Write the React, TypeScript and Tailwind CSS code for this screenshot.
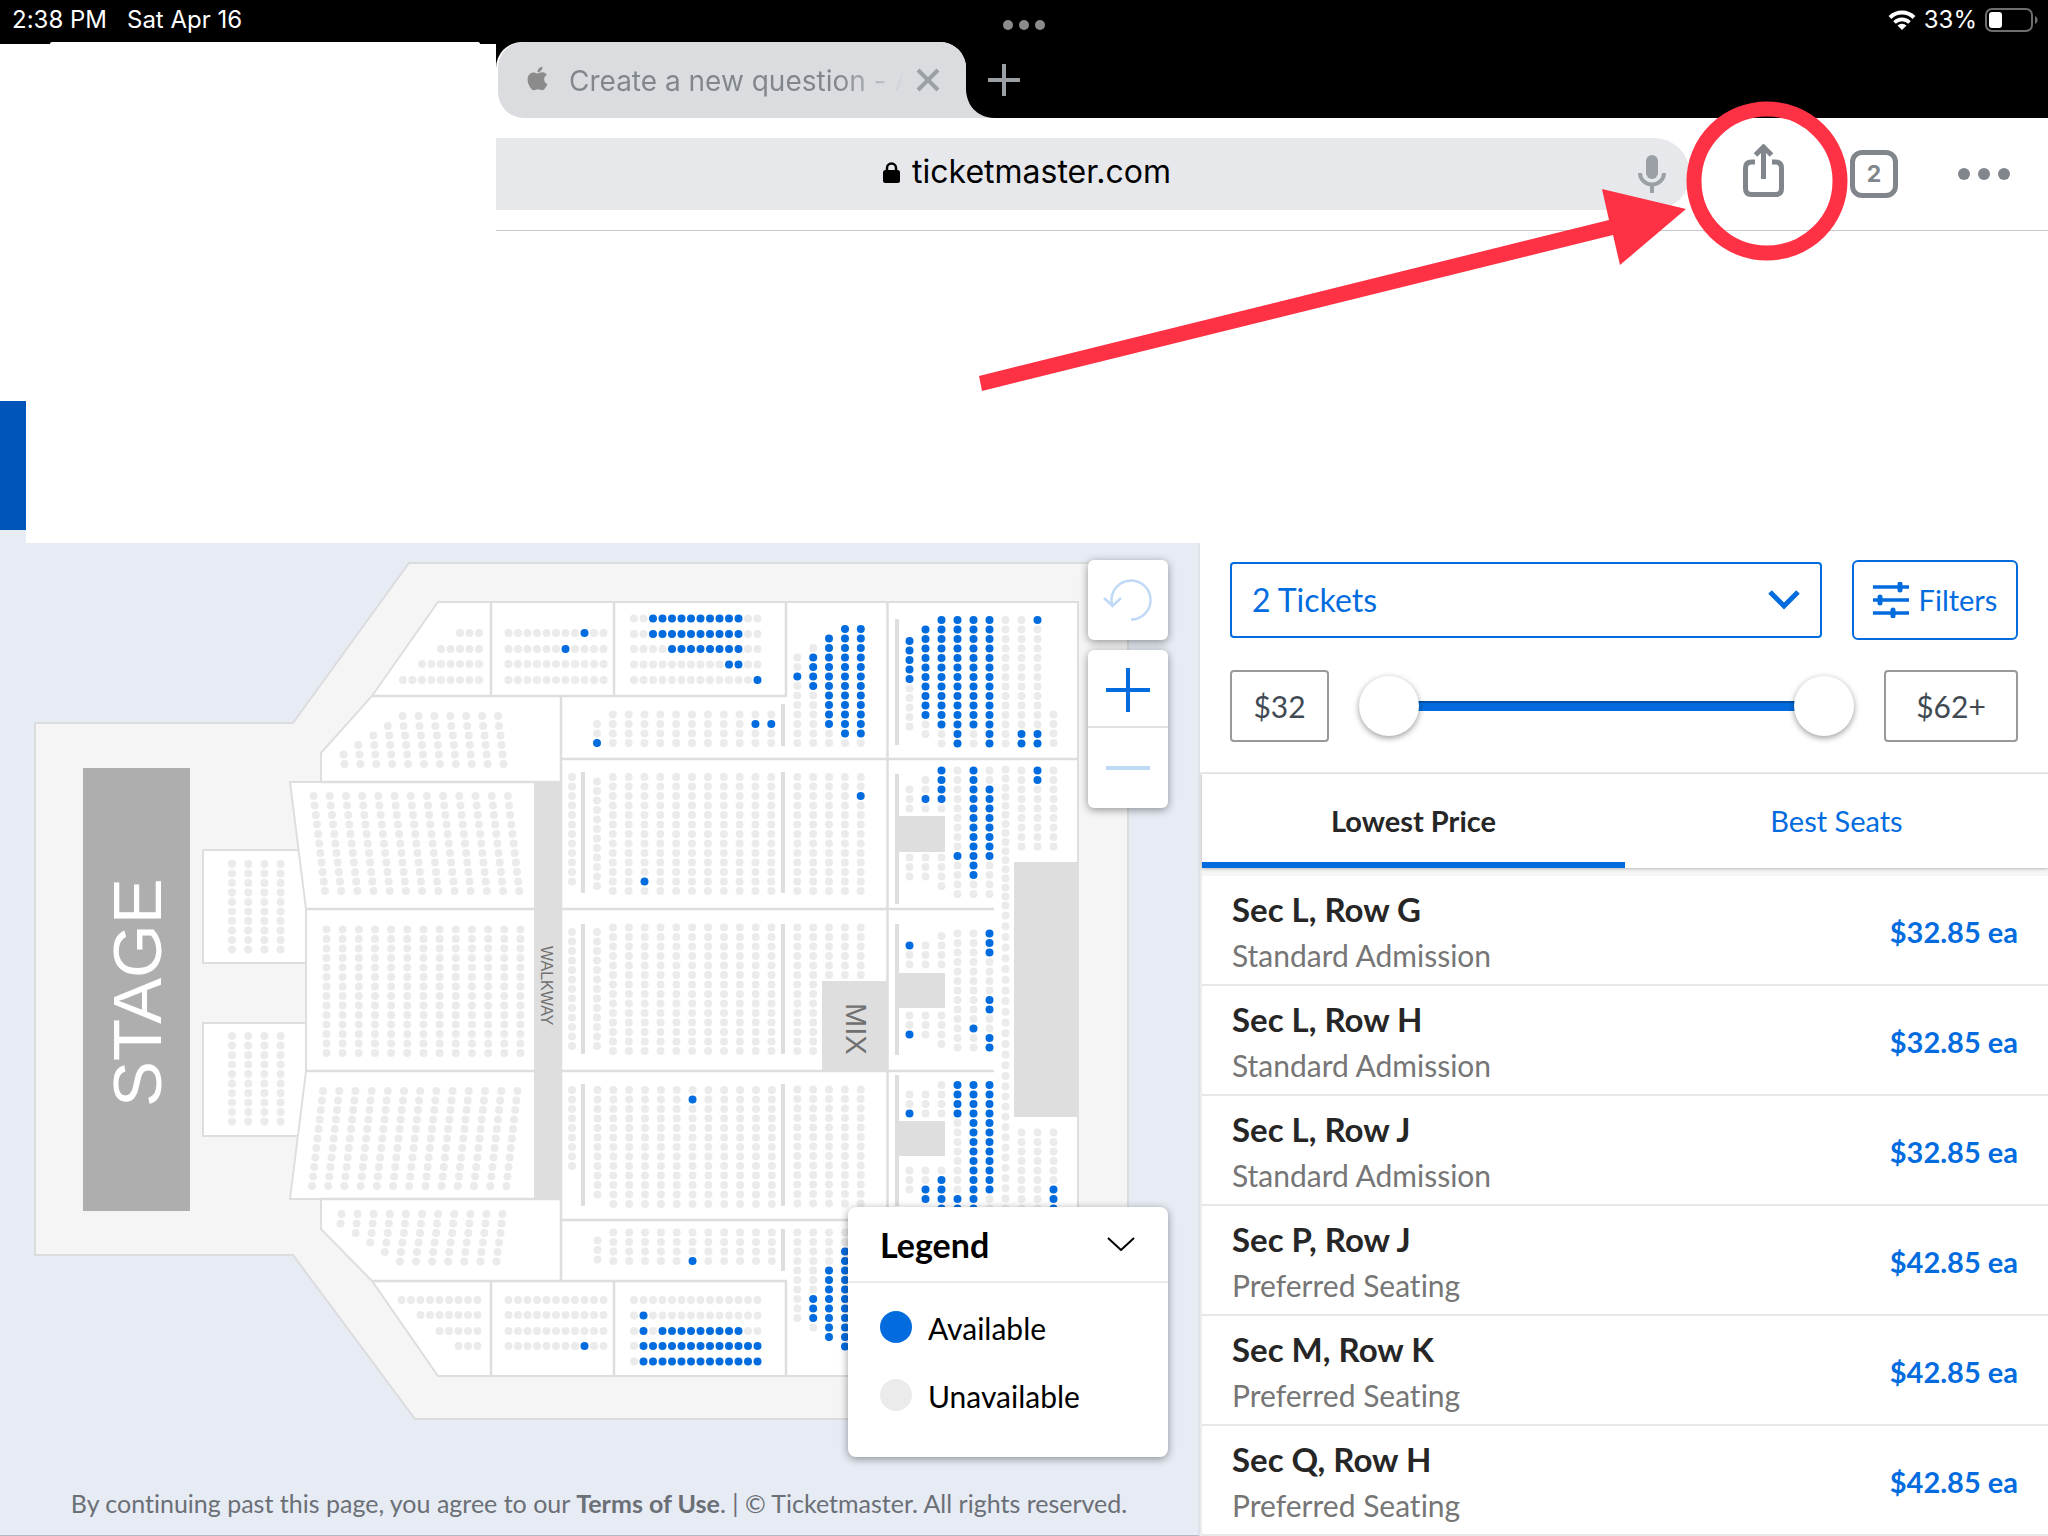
import { useState } from 'react';
import { FaApple } from 'react-icons/fa';

const sysFont = 'font-[Inter,"Liberation_Sans",sans-serif]';
const pageFont = 'font-[Lato,"Open_Sans",sans-serif] [font-variant-ligatures:none]';

const SEAT = 9.5;

const offers = [
  { id: 1, place: 'Sec L, Row G', kind: 'Standard Admission', price: '$32.85 ea' },
  { id: 2, place: 'Sec L, Row H', kind: 'Standard Admission', price: '$32.85 ea' },
  { id: 3, place: 'Sec L, Row J', kind: 'Standard Admission', price: '$32.85 ea' },
  { id: 4, place: 'Sec P, Row J', kind: 'Preferred Seating', price: '$42.85 ea' },
  { id: 5, place: 'Sec M, Row K', kind: 'Preferred Seating', price: '$42.85 ea' },
  { id: 6, place: 'Sec Q, Row H', kind: 'Preferred Seating', price: '$42.85 ea' },
];

// A run of seats: start point, one character per seat (x = available), step to the next seat.
type Run = { x: number; y: number; seats: string; dx: number; dy: number };

const empty = (n: number) => '.'.repeat(n);

function row(x: number, y: number, seats: string, dx = SEAT): Run {
  return { x, y, seats, dx, dy: 0 };
}

function col(x: number, y: number, seats: string, dy = SEAT, dx = 0): Run {
  return { x, y, seats, dx, dy };
}

// n equal columns side by side; "special" replaces the pattern of single columns
function cols(
  x: number,
  y: number,
  n: number,
  rows: number,
  pitch: number,
  special: Record<number, string> = {},
  lean = 0,
): Run[] {
  return Array.from({ length: n }, (_, i) =>
    col(x + pitch * i, y, special[i] ?? empty(rows), SEAT, lean),
  );
}

// rows that end on the same side, each with its own length
function flushRight(ends: number[], ys: number[], counts: number[], pitch: number): Run[] {
  return counts.map((n, i) => row(ends[i] - pitch * (n - 1), ys[i], empty(n), pitch));
}

const MID = 15.85;
const topRows = [633, 649, 664, 680];
const bottomRows = [1300, 1315, 1331, 1346];
const rx = (i: number) => 909.5 + 16 * i;

const runs: Run[] = [
  // upper balcony
  ...flushRight([479, 479, 479, 479], topRows, [3, 5, 7, 9], SEAT),
  row(508.5, topRows[0], '........x..'),
  row(508.5, topRows[1], '......x....'),
  row(508.5, topRows[2], empty(11)),
  row(508.5, topRows[3], empty(11)),
  row(634, 618.5, '..xxxxxxxxxx..'),
  row(634, 634, '..xxxxxxxxxx..'),
  row(634, 649, '....xxxxxxxx..'),
  row(634, 664.5, '..........xx..'),
  row(634, 680, '.............x'),

  // lower balcony
  ...flushRight([477.5, 477.5, 477.5, 477.5], bottomRows, [9, 7, 5, 3], SEAT),
  row(508.5, bottomRows[0], empty(11)),
  row(508.5, bottomRows[1], empty(11)),
  row(508.5, bottomRows[2], empty(11)),
  row(508.5, bottomRows[3], '........x..'),
  row(634, 1300, empty(14)),
  row(634, 1315.5, '.x............'),
  row(634, 1331, '.x.xxxxxxxxx..'),
  row(634, 1346, '.xxxxxxxxxxxxx'),
  row(634, 1361.5, '.xxxxxxxxxxxxx'),

  // front corners
  ...flushRight(
    [498, 499, 500.5, 501.5, 502.5, 503.5],
    [716, 726, 735.5, 745, 754.5, 764],
    [7, 8, 9, 10, 11, 11],
    15.9,
  ),
  ...flushRight(
    [502.5, 501.5, 500.5, 499, 497.5, 496.5],
    [1214, 1223.5, 1233, 1242.5, 1252, 1261.5],
    [11, 11, 10, 9, 8, 7],
    16.1,
  ),

  // pit boxes
  ...cols(232, 864, 4, 10, 16.2),
  ...cols(232, 1036, 4, 10, 16.2),

  // front blocks
  ...cols(313.5, 796, 13, 11, 16.2, {}, 1.14),
  ...cols(326.5, 929.5, 13, 14, 16.16),
  ...cols(323, 1091, 13, 11, 16.2, {}, -1.1),

  // middle blocks, top to bottom
  col(597, 724, '..x'),
  ...cols(612.8, 714.5, 11, 4, MID, { 9: '.x..', 10: '.x..' }),
  col(572, 777, empty(12)),
  col(597, 781.5, empty(12)),
  ...cols(612.8, 777, 11, 13, MID, { 2: '...........x.' }),
  ...cols(797.3, 777, 5, 13, MID, { 4: '..x..........' }),
  col(572, 932, empty(13)),
  col(597, 932, empty(13)),
  ...cols(613, 927.5, 11, 14, MID),
  ...cols(797.3, 927.5, 2, 14, MID),
  ...cols(829, 927.5, 3, 6, MID),
  col(572, 1090, empty(9)),
  col(597.5, 1090, empty(12)),
  ...cols(613.3, 1090, 11, 13, MID, { 5: '.x...........' }),
  ...cols(797.3, 1089.5, 5, 13, MID),
  col(597.5, 1240.5, empty(3)),
  ...cols(613.3, 1232.5, 11, 4, MID, { 5: '...x' }),

  // angled blocks behind the middle
  col(797.3, 657.5, '..x.......'),
  col(813.2, 648, '.xxxx......'),
  col(829, 638.5, 'xxxxxxxxxx..'),
  col(845, 629, 'xxxxxxxxxxxx.'),
  col(860.8, 629, 'xxxxxxxxxxxx.'),
  col(797.3, 1232.5, empty(10)),
  col(813.2, 1232.5, '.......xxx.'),
  col(829, 1232.5, '....xxxxxxxx'),
  col(845, 1232.5, '..xxxxxxxxxxx'),

  // rear block, top
  col(rx(0), 641, 'xxxxx.....'),
  col(rx(1), 629.5, 'xxxxxxxxxx..'),
  col(rx(2), 620, 'xxxxxxxxxxxx..'),
  col(rx(3), 620, 'xxxxxxxxxxxxxx'),
  col(rx(4), 620, 'xxxxxxxxxxxx..'),
  col(rx(5), 620, 'xxxxxxxxxxxxxx'),
  col(rx(6), 620, empty(14)),
  col(rx(7), 620, '............xx'),
  col(rx(8), 620, 'x...........xx'),
  col(rx(9), 714.5, empty(4)),

  // rear block, second
  col(rx(0), 789.5, empty(3)),
  col(rx(1), 780, '..x.'),
  col(rx(2), 770.5, 'xxxx.'),
  col(rx(0), 857.5, empty(3)),
  col(rx(1), 857.5, empty(3)),
  col(rx(2), 857.5, empty(4)),
  col(rx(3), 770.5, '.........x....'),
  col(rx(4), 770.5, 'xxxxxxxxxxxx..'),
  col(rx(5), 770.5, '..xxxxxxxx....'),
  col(rx(7), 770.5, empty(9)),
  col(rx(8), 770.5, 'xx.......'),
  col(rx(9), 770.5, empty(9)),

  // long rear column
  col(rx(6), 769.5, empty(16), 9.07),
  col(rx(6), 915.5, empty(15), 10.7),
  col(rx(6), 1076, empty(14), 10.2),

  // rear block, third
  col(rx(0), 945.5, 'x..'),
  col(rx(1), 945.5, empty(3)),
  col(rx(2), 936, empty(4)),
  col(rx(0), 1015.5, '..x'),
  col(rx(1), 1015.5, empty(3)),
  col(rx(2), 1015.5, empty(4)),
  col(rx(3), 933.5, empty(13)),
  col(rx(4), 933.5, '..........x..'),
  col(rx(5), 933.5, 'xxx....xx..xx'),

  // rear block, fourth
  col(rx(0), 1094.5, '..x'),
  col(rx(1), 1094.5, empty(3)),
  col(rx(2), 1085, empty(4)),
  col(rx(0), 1170.5, empty(3)),
  col(rx(1), 1170.5, '..xx'),
  col(rx(2), 1170.5, '.xxxx'),
  col(rx(3), 1085, 'xxxx........xx'),
  col(rx(4), 1085, 'xxxxxxxxxxxxxx'),
  col(rx(5), 1085, 'xxxxxxxxxxxx..'),
  col(rx(7), 1132.5, empty(9)),
  col(rx(8), 1132.5, empty(9)),
  col(rx(9), 1132.5, '......xxx'),
];

// x, y, width, height
const blocks = [
  [534, 782, 27, 417],
  [822, 981, 66, 90],
  [1014, 862, 64, 255],
  [897, 816, 48, 36],
  [897, 973, 48, 35],
  [897, 1121, 48, 35],
  [895, 619, 4, 126],
  [895, 774, 4, 130],
  [895, 924, 4, 131],
  [895, 1075, 4, 131],
  [781, 704, 4, 42],
  [781, 772, 4, 121],
  [781, 924, 4, 130],
  [781, 1084, 4, 122],
  [781, 1229, 4, 42],
  [581, 772, 4, 121],
  [581, 924, 4, 130],
  [581, 1084, 4, 122],
];

function SeatMap() {
  return (
    <svg viewBox="0 543 1198 930" className="block h-auto w-full" role="img" aria-label="Seat map">
      <path
        d="M35 723H293L409 563H1128V1419H415L293 1255H35Z"
        fill="#f5f5f5"
        stroke="#dcdcde"
        strokeWidth="2"
      />
      <rect x="83" y="768" width="107" height="443" fill="#aeaeae" />
      <g fill="#fff" stroke="#dedede" strokeWidth="2">
        <rect x="203" y="850" width="110" height="113" />
        <rect x="203" y="1023" width="110" height="113" />
        <path d="M438 602H1078V1376H438L372 1281L321 1229V1199H290L306 1071V909L290 782H321V753L372 696Z" />
      </g>
      <path
        d="M372 696H787M491 602V696M614 602V696M786 602V696M561 696V1281M887.500 602V1376M561 759H1078M561 909H994M306 909H534M561 1071H994M306 1071H534M561 1220H1078M372 1281H787M491 1281V1376M614 1281V1376M786 1281V1376M321 782H561M321 1199H561"
        fill="none"
        stroke="#dedede"
        strokeWidth="2.500"
      />
      {blocks.map(([x, y, w, h]) => (
        <rect key={`${x}-${y}`} x={x} y={y} width={w} height={h} fill="#dedede" />
      ))}
      {runs.map((run, r) => (
        <g key={r}>
          {run.seats.split('').map((s, i) => (
            <circle
              key={i}
              cx={run.x + run.dx * i}
              cy={run.y + run.dy * i}
              r="4"
              fill={s === 'x' ? '#026cdf' : '#ebebeb'}
            />
          ))}
        </g>
      ))}
      <g className='font-["Liberation_Sans",Arial,sans-serif]'>
        <text transform="translate(161 1107) rotate(-90)" fontSize="69" fill="#fff">
          STAGE
        </text>
        <text transform="translate(541 946) rotate(90)" fontSize="16" fill="#707070">
          WALKWAY
        </text>
        <text transform="translate(846 1003) rotate(90)" fontSize="29" fill="#707070">
          MIX
        </text>
      </g>
    </svg>
  );
}

function StatusBar() {
  return (
    <div className="grid h-[42px] grid-cols-3 bg-black text-[24px] leading-10 text-white">
      <div className="flex gap-5 pl-[12px]">
        <span>2:38 PM</span>
        <span>Sat Apr 16</span>
      </div>
      <div className="flex items-end justify-center gap-[6px] pb-3">
        <span className="size-[10px] rounded-full bg-[#8b8b8b]" />
        <span className="size-[10px] rounded-full bg-[#8b8b8b]" />
        <span className="size-[10px] rounded-full bg-[#8b8b8b]" />
      </div>
      <div className="flex justify-end gap-2 pr-[9px]">
        <svg viewBox="0 0 28 20" className="mt-[10px] h-5 w-7" fill="none" stroke="#fff" strokeWidth="4">
          <path d="M2 7.5A17 17 0 0 1 26 7.5" />
          <path d="M6.5 12.5A10.500 10.500 0 0 1 21.500 12.500" strokeWidth="3.600" />
          <path d="M14 20L9.500 15.500A6.500 6.500 0 0 1 18.500 15.500Z" fill="#fff" stroke="none" />
        </svg>
        <span>33%</span>
        <svg viewBox="0 0 54 24" className="mt-2 h-6 w-[54px]" fill="none">
          <rect x="1" y="1" width="46" height="22" rx="6" stroke="#6e6e6e" strokeWidth="2" />
          <rect x="4" y="4" width="13" height="16" rx="3" fill="#fff" />
          <path d="M50 8C53.500 9.500 53.500 14.500 50 16Z" fill="#6e6e6e" />
        </svg>
      </div>
    </div>
  );
}

function BrowserBar() {
  return (
    <div className="flex">
      <div className="flex w-[496px] flex-col bg-black">
        <div className="mr-4 ml-[50px] h-[2px] rounded-t bg-white" />
        <div className="flex-1 bg-white" />
      </div>
      <div className="flex-1 border-b border-[#c6c7c9]">
        <div className="flex h-[76px] items-center bg-black">
          <div className="relative h-full w-[470px] rounded-t-[26px] bg-white pl-[2px]">
            <div className="flex h-full items-center rounded-l-[26px] rounded-tr-[26px] bg-[#dadce0] pr-[26px] pl-[26px]">
              <FaApple className="mb-1 size-[27px] text-[#8b8b8b]" />
              <span className="ml-[18px] flex-1 overflow-hidden bg-linear-to-r from-[#80868b] from-80% to-transparent bg-clip-text pt-[2px] text-[28px] whitespace-nowrap text-transparent">
                Create a new question - A
              </span>
              <button type="button" aria-label="Close tab" className="ml-3">
                <svg viewBox="0 0 24 24" className="size-6" stroke="#9aa0a6" strokeWidth="4">
                  <path d="M2 2L22 22M22 2L2 22" />
                </svg>
              </button>
            </div>
            <svg viewBox="0 0 28 28" className="absolute bottom-0 left-full size-7">
              <path d="M0 0C1 16 11 27 28 28H0Z" fill="#dadce0" />
            </svg>
          </div>
          <button type="button" aria-label="New tab" className="z-10 ml-[22px]">
            <svg viewBox="0 0 32 32" className="size-8" stroke="#9aa0a6" strokeWidth="4">
              <path d="M16 0V32M0 16H32" />
            </svg>
          </button>
        </div>

        <div className="flex items-center bg-white py-5 pr-[38px]">
          <div className="flex h-[72px] flex-1 items-center rounded-r-full bg-[#e7e8ec] pr-6">
            <button
              type="button"
              className="flex flex-1 items-center justify-center gap-3 pr-[80px] pb-1 text-[32px] leading-10 text-black"
            >
              <svg viewBox="0 0 17 21" className="h-[21px] w-[17px]">
                <rect x="0" y="8" width="17" height="13" rx="2.500" />
                <path d="M4 9V6A4.500 4.500 0 0 1 13 6V9" fill="none" stroke="#000" strokeWidth="2.500" />
              </svg>
              ticketmaster.com
            </button>
            <button type="button" aria-label="Voice search">
              <svg viewBox="0 0 28 38" className="h-[38px] w-7" fill="none">
                <rect x="8" y="0" width="12" height="24" rx="6" fill="#9aa0a6" />
                <path d="M2 18A12 11.500 0 0 0 26 18M14 30V38" stroke="#9aa0a6" strokeWidth="4" />
              </svg>
            </button>
          </div>
          <button type="button" aria-label="Share" className="ml-[53px] pb-[6px]">
            <svg viewBox="0 0 42 54" className="block h-[54px] w-[42px]" fill="none" stroke="#80868b" strokeWidth="5">
              <path d="M12 18H8.500Q2.500 18 2.500 24V44.500Q2.500 50.500 8.500 50.500H32.500Q38.500 50.500 38.500 44.500V24Q38.500 18 32.500 18H29" />
              <path d="M20.500 35V4M12.500 11L20.500 3L28.500 11" />
            </svg>
          </button>
          <button
            type="button"
            aria-label="2 open tabs"
            className="ml-[65px] flex size-12 items-center justify-center rounded-[12px] border-[5px] border-[#80868b] text-[23px] font-bold text-[#80868b]"
          >
            2
          </button>
          <button type="button" aria-label="More" className="ml-[60px] flex gap-2">
            <span className="size-3 rounded-full bg-[#80868b]" />
            <span className="size-3 rounded-full bg-[#80868b]" />
            <span className="size-3 rounded-full bg-[#80868b]" />
          </button>
        </div>
      </div>
    </div>
  );
}

function MapControls() {
  return (
    <div className="absolute top-[17px] right-[30px] flex w-20 flex-col gap-[10px]">
      <button
        type="button"
        aria-label="Reset map"
        className="rounded-[6px] bg-white shadow-[0_2px_8px_rgba(0,0,0,0.4)]"
      >
        <svg viewBox="0 0 80 80" className="size-20" fill="none" stroke="#c0d9f6" strokeWidth="2.500">
          <path d="M43 59.500A19.500 19.500 0 1 0 24.500 46" />
          <path d="M16 38L24.500 46L33 38" />
        </svg>
      </button>
      <div className="flex flex-col rounded-[6px] bg-white shadow-[0_2px_8px_rgba(0,0,0,0.4)]">
        <button type="button" aria-label="Zoom in">
          <svg viewBox="0 0 80 76" className="block h-[76px] w-20" stroke="#026cdf" strokeWidth="4">
            <path d="M40 18V62M18 40H62" />
          </svg>
        </button>
        <button type="button" aria-label="Zoom out" className="border-t-2 border-[#e2e2e2]">
          <svg viewBox="0 0 80 80" className="block size-20" stroke="#c0d9f6" strokeWidth="4">
            <path d="M18 40H62" />
          </svg>
        </button>
      </div>
    </div>
  );
}

function Legend() {
  return (
    <div className="absolute right-[30px] bottom-[78px] h-[250px] w-80 rounded-[8px] bg-white text-black shadow-[0_2px_8px_rgba(0,0,0,0.4)]">
      <button
        type="button"
        className="flex h-[76px] w-full items-center justify-between border-b-2 border-[#ebebeb] pr-[33px] pl-8 text-[34px] font-bold"
      >
        Legend
        <svg viewBox="0 0 28 14" className="h-[14px] w-7" fill="none" stroke="#000" strokeWidth="2">
          <path d="M1 1L14 13L27 1" />
        </svg>
      </button>
      <ul className="flex flex-col gap-7 px-8 pt-6 text-[30px] leading-10">
        <li className="flex items-center gap-4">
          <span className="size-8 rounded-full bg-[#026cdf]" />
          <span className="pt-[2px] leading-[38px]">Available</span>
        </li>
        <li className="flex items-center gap-4">
          <span className="size-8 rounded-full bg-[#ebebeb]" />
          <span className="pt-[2px] leading-[38px]">Unavailable</span>
        </li>
      </ul>
    </div>
  );
}

const thumbClass =
  'pointer-events-none absolute inset-0 h-[60px] w-full appearance-none bg-transparent [&::-webkit-slider-thumb]:pointer-events-auto [&::-webkit-slider-thumb]:size-[60px] [&::-webkit-slider-thumb]:appearance-none [&::-webkit-slider-thumb]:rounded-full [&::-webkit-slider-thumb]:bg-white [&::-webkit-slider-thumb]:shadow-[0_2px_6px_rgba(0,0,0,0.4)]';
const priceClass =
  'flex h-[72px] items-center justify-center rounded-[4px] border-2 border-[#999] text-[30px] text-[#414a52]';

function Filters() {
  const [low, setLow] = useState(32);
  const [high, setHigh] = useState(62);

  return (
    <div className="px-[30px] pt-[17px] pb-[30px]">
      <div className="flex items-center gap-[30px]">
        <div className="relative flex-1">
          <select
            aria-label="Number of tickets"
            defaultValue="2"
            className="h-[76px] w-full appearance-none rounded-[4px] border-2 border-[#026cdf] bg-white px-5 text-[32px] text-[#026cdf]"
          >
            <option value="1">1 Ticket</option>
            <option value="2">2 Tickets</option>
            <option value="3">3 Tickets</option>
          </select>
          <svg
            viewBox="0 0 32 20"
            className="pointer-events-none absolute top-7 right-[22px] h-5 w-8"
            fill="none"
            stroke="#026cdf"
            strokeWidth="5"
          >
            <path d="M2 2L16 16L30 2" />
          </svg>
        </div>
        <button
          type="button"
          className="flex h-20 w-[166px] items-center justify-center gap-[10px] rounded-[6px] border-2 border-[#026cdf] text-[29px] text-[#026cdf]"
        >
          <svg viewBox="0 0 36 36" className="size-9" stroke="#026cdf" strokeWidth="3.500">
            <path d="M0 5H36M0 18H36M0 31H36" />
            <path d="M27 2V8M7 15V21M20 28V34" strokeWidth="5" strokeLinecap="round" />
          </svg>
          Filters
        </button>
      </div>

      <div className="mt-[30px] flex items-center gap-[30px]">
        <div className={`w-[99px] ${priceClass}`}>${low}</div>
        <div className="relative flex h-[60px] flex-1 items-center px-[30px]">
          <div className="h-[10px] flex-1 border-t-2 border-[#0150a7] bg-[#026cdf]" />
          <input
            type="range"
            aria-label="Lowest price"
            min={32}
            max={62}
            value={low}
            onChange={(e) => setLow(Math.min(Number(e.target.value), high))}
            className={thumbClass}
          />
          <input
            type="range"
            aria-label="Highest price"
            min={32}
            max={62}
            value={high}
            onChange={(e) => setHigh(Math.max(Number(e.target.value), low))}
            className={thumbClass}
          />
        </div>
        <div className={`w-[134px] ${priceClass}`}>${high}+</div>
      </div>
    </div>
  );
}

function OfferPanel() {
  const [tab, setTab] = useState<'price' | 'seats'>('price');
  const tabClass = (active: boolean) =>
    active
      ? 'h-[94px] flex-1 border-b-[6px] border-[#026cdf] pt-[6px] font-bold text-[#262626]'
      : 'h-[94px] flex-1 border-b-[6px] border-transparent pt-[6px] text-[#026cdf]';

  return (
    <aside className="flex flex-col bg-white">
      <Filters />
      <div className="flex-1 border-t-2 border-l-2 border-[#ebebeb]">
        <div
          className="relative flex bg-white text-[29px] shadow-[0_1px_3px_rgba(0,0,0,0.25)]"
          role="tablist"
        >
          <button
            type="button"
            role="tab"
            aria-selected={tab === 'price'}
            onClick={() => setTab('price')}
            className={tabClass(tab === 'price')}
          >
            Lowest Price
          </button>
          <button
            type="button"
            role="tab"
            aria-selected={tab === 'seats'}
            onClick={() => setTab('seats')}
            className={tabClass(tab === 'seats')}
          >
            Best Seats
          </button>
        </div>
        <ul className="border-t-8 border-[#f5f5f5]">
          {offers.map((offer) => (
            <li
              key={offer.id}
              className="flex h-[110px] items-center justify-between border-b-2 border-[#e8e8e8] px-[30px] pt-1"
            >
              <div>
                <p className="text-[33px] leading-[46px] font-bold text-[#262626]">{offer.place}</p>
                <p className="text-[30px] leading-[46px] text-[#767676]">{offer.kind}</p>
              </div>
              <p className="text-[29px] font-bold text-[#026cdf]">{offer.price}</p>
            </li>
          ))}
        </ul>
      </div>
    </aside>
  );
}

function ShareHint() {
  return (
    <svg
      viewBox="0 0 900 320"
      className="pointer-events-none absolute top-[90px] right-[180px] h-[320px] w-[900px]"
      aria-hidden="true"
    >
      <ellipse cx="799" cy="91" rx="73" ry="72" fill="none" stroke="#ff3144" strokeWidth="15" />
      <path d="M11 286L641 130L634 99L718 119L652 175L645 145L14 301Z" fill="#ff3144" />
    </svg>
  );
}

export default function App() {
  return (
    <div className={`relative min-h-screen overflow-hidden bg-white ${pageFont}`}>
      <header className={sysFont}>
        <StatusBar />
        <BrowserBar />
      </header>
      <ShareHint />

      <div className="flex h-[312px]">
        <div className="flex w-[26px] flex-col">
          <div className="flex-1" />
          <div className="h-[129px] bg-[#0056b8]" />
          <div className="h-[13px] bg-[#e6ebf4]" />
        </div>
      </div>

      <main className="grid grid-cols-[75fr_53fr]">
        <section className="relative flex flex-col border-r-2 border-b border-[#dfe2e8] border-b-[#b4b9c4] bg-[#e6ebf4]">
          <SeatMap />
          <MapControls />
          <Legend />
          <p className="flex-1 pt-[11px] text-center text-[25px] leading-[38px] text-[#6b6f76]">
            By continuing past this page, you agree to our{' '}
            <a href="#terms" className="font-bold">
              Terms of Use
            </a>
            . | © Ticketmaster. All rights reserved.
          </p>
        </section>
        <OfferPanel />
      </main>
    </div>
  );
}
